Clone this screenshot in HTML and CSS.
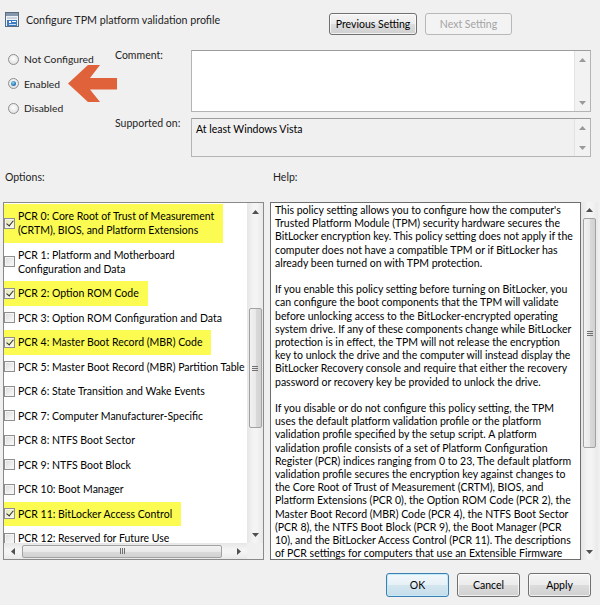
FILE: index.html
```html
<!DOCTYPE html>
<html lang="en">
<head>
<meta charset="utf-8">
<title>Configure TPM platform validation profile</title>
<link rel="stylesheet" href="styles.css">
</head>
<body>
<div class="dialog">
  <header class="head">
    <div class="title">
      <svg class="ticon" width="15" height="15" viewBox="0 0 15 15">
        <rect x="0.5" y="0.5" width="13" height="14" fill="#eef2f6" stroke="#5b6c7e"/>
        <rect x="1" y="1" width="12" height="3" fill="#8597ad"/>
        <rect x="2" y="5" width="10" height="2" fill="#c9d3de"/>
        <rect x="2" y="8" width="10" height="6" fill="#3d7cc2"/>
        <rect x="4" y="9" width="2" height="2" fill="#ffffff"/>
        <rect x="7" y="9" width="4" height="1" fill="#ffffff"/>
        <rect x="4" y="12" width="7" height="1" fill="#cfe0f3"/>
      </svg>
      <span>Configure TPM platform validation profile</span>
    </div>
    <div class="nav">
      <button class="btn prev">Previous Setting</button>
      <button class="btn next" disabled>Next Setting</button>
    </div>
  </header>

  <section class="top">
    <div class="states">
      <label class="radio"><span class="rb"></span>Not Configured</label>
      <label class="radio"><span class="rb on"></span>Enabled</label>
      <label class="radio"><span class="rb"></span>Disabled</label>
      <svg class="pointer" width="50" height="38" viewBox="0 0 50 38">
        <polygon points="0,18.5 20,0 32,0 22,13 49,13 49,24.5 22,24.5 32,37 20,37" fill="#e0623a"/>
      </svg>
    </div>
    <div class="fields">
      <div class="flabel">Comment:</div>
      <div class="box comment">
        <div class="boxbody"></div>
        <div class="vbar plain">
          <span class="arr"><svg width="7" height="4" viewBox="0 0 7 4"><polygon points="0,4 3.5,0 7,4" fill="#9a9a9a"/></svg></span>
          <span class="track"></span>
          <span class="arr"><svg width="7" height="4" viewBox="0 0 7 4"><polygon points="0,0 3.5,4 7,0" fill="#9a9a9a"/></svg></span>
        </div>
      </div>
      <div class="flabel">Supported on:</div>
      <div class="box supported">
        <div class="boxbody">At least Windows Vista</div>
        <div class="vbar plain">
          <span class="arr"><svg width="7" height="4" viewBox="0 0 7 4"><polygon points="0,4 3.5,0 7,4" fill="#9a9a9a"/></svg></span>
          <span class="track"></span>
          <span class="arr"><svg width="7" height="4" viewBox="0 0 7 4"><polygon points="0,0 3.5,4 7,0" fill="#9a9a9a"/></svg></span>
        </div>
      </div>
    </div>
  </section>

  <div class="labels">
    <span class="lab-opt">Options:</span>
    <span class="lab-help">Help:</span>
  </div>

  <div class="panes">
    <div class="list">
      <div class="items">
        <div class="item tall hl"><span class="cb on"></span><span>PCR 0: Core Root of Trust of Measurement<br>(CRTM), BIOS, and Platform Extensions</span></div>
        <div class="item tall"><span class="cb"></span><span>PCR 1: Platform and Motherboard<br>Configuration and Data</span></div>
        <div class="item hl"><span class="cb on"></span><span>PCR 2: Option ROM Code</span></div>
        <div class="item"><span class="cb"></span><span>PCR 3: Option ROM Configuration and Data</span></div>
        <div class="item hl"><span class="cb on"></span><span>PCR 4: Master Boot Record (MBR) Code</span></div>
        <div class="item"><span class="cb"></span><span>PCR 5: Master Boot Record (MBR) Partition Table</span></div>
        <div class="item"><span class="cb"></span><span>PCR 6: State Transition and Wake Events</span></div>
        <div class="item"><span class="cb"></span><span>PCR 7: Computer Manufacturer-Specific</span></div>
        <div class="item"><span class="cb"></span><span>PCR 8: NTFS Boot Sector</span></div>
        <div class="item"><span class="cb"></span><span>PCR 9: NTFS Boot Block</span></div>
        <div class="item"><span class="cb"></span><span>PCR 10: Boot Manager</span></div>
        <div class="item hl"><span class="cb on"></span><span>PCR 11: BitLocker Access Control</span></div>
        <div class="item"><span class="cb"></span><span>PCR 12: Reserved for Future Use</span></div>
      </div>
      <div class="vbar">
        <span class="arr"><svg width="7" height="4" viewBox="0 0 7 4"><polygon points="0,4 3.5,0 7,4" fill="#505050"/></svg></span>
        <span class="track"><span class="thumb v list-thumb"><span class="grip"></span></span></span>
        <span class="arr"><svg width="7" height="4" viewBox="0 0 7 4"><polygon points="0,0 3.5,4 7,0" fill="#505050"/></svg></span>
      </div>
      <div class="hbar">
        <span class="arr"><svg width="4" height="7" viewBox="0 0 4 7"><polygon points="4,0 0,3.5 4,7" fill="#505050"/></svg></span>
        <span class="htrack"><span class="thumb h"><span class="grip"></span></span></span>
        <span class="arr"><svg width="4" height="7" viewBox="0 0 4 7"><polygon points="0,0 4,3.5 0,7" fill="#505050"/></svg></span>
      </div>
      <div class="corner"></div>
    </div>

    <div class="help">
      <div class="helptext">
        <p>This policy setting allows you to configure how the computer's<br>Trusted Platform Module (TPM) security hardware secures the<br>BitLocker encryption key. This policy setting does not apply if the<br>computer does not have a compatible TPM or if BitLocker has<br>already been turned on with TPM protection.</p>
        <p>If you enable this policy setting before turning on BitLocker, you<br>can configure the boot components that the TPM will validate<br>before unlocking access to the BitLocker-encrypted operating<br>system drive. If any of these components change while BitLocker<br>protection is in effect, the TPM will not release the encryption<br>key to unlock the drive and the computer will instead display the<br>BitLocker Recovery console and require that either the recovery<br>password or recovery key be provided to unlock the drive.</p>
        <p>If you disable or do not configure this policy setting, the TPM<br>uses the default platform validation profile or the platform<br>validation profile specified by the setup script. A platform<br>validation profile consists of a set of Platform Configuration<br>Register (PCR) indices ranging from 0 to 23, The default platform<br>validation profile secures the encryption key against changes to<br>the Core Root of Trust of Measurement (CRTM), BIOS, and<br>Platform Extensions (PCR 0), the Option ROM Code (PCR 2), the<br>Master Boot Record (MBR) Code (PCR 4), the NTFS Boot Sector<br>(PCR 8), the NTFS Boot Block (PCR 9), the Boot Manager (PCR<br>10), and the BitLocker Access Control (PCR 11). The descriptions<br>of PCR settings for computers that use an Extensible Firmware</p>
      </div>
      <div class="vbar">
        <span class="arr"><svg width="7" height="4" viewBox="0 0 7 4"><polygon points="0,4 3.5,0 7,4" fill="#505050"/></svg></span>
        <span class="track"><span class="thumb v help-thumb"><span class="grip"></span></span></span>
        <span class="arr"><svg width="7" height="4" viewBox="0 0 7 4"><polygon points="0,0 3.5,4 7,0" fill="#505050"/></svg></span>
      </div>
    </div>
  </div>

  <footer class="foot">
    <button class="btn ok">OK</button>
    <button class="btn">Cancel</button>
    <button class="btn">Apply</button>
  </footer>
</div>
</body>
</html>
```

FILE: styles.css
```css
* { box-sizing: border-box; }

body {
  margin: 0;
  background: #f0f0f0;
  font-family: "Lato", "Noto Sans", sans-serif;
  font-size: 10.5px;
  color: #000;
}

.dialog {
  width: 600px;
  height: 605px;
  overflow: hidden;
}

/* header */
.head {
  display: flex;
  align-items: flex-start;
  height: 47px;
  padding: 12px 0 0 5px;
}
.title {
  display: flex;
  align-items: center;
  gap: 6px;
  height: 15px;
  font-size: 10.7px;
  color: #1e1e1e;
}
.ticon { display: block; }
.nav {
  display: flex;
  gap: 8px;
  margin: 1px 88px 0 auto;
}

.btn {
  height: 22px;
  padding: 0;
  font: inherit;
  color: #000;
  border: 1px solid #707070;
  border-radius: 3px;
  background: linear-gradient(#f4f4f4 0%, #ececec 48%, #dcdcdc 52%, #d0d0d0 100%);
  box-shadow: inset 0 0 0 1px rgba(255,255,255,0.7);
}
.btn.prev { width: 88px; }
.btn.next { width: 87px; }
.btn:disabled {
  color: #a3a3a3;
  border-color: #b8b8b8;
  background: #f3f3f3;
  box-shadow: none;
}

/* top */
.top {
  display: flex;
  height: 110px;
}
.states {
  position: relative;
  width: 115px;
  padding-left: 8px;
}
.radio {
  display: flex;
  align-items: center;
  gap: 5px;
  height: 24.5px;
  color: #1e1e1e;
  font-size: 10.3px;
}
.rb {
  width: 11px;
  height: 11px;
  border-radius: 50%;
  border: 1px solid #8e8f8f;
  background: radial-gradient(circle at 50% 40%, #ffffff 0%, #e8e8e8 60%, #d4d4d4 100%);
  display: flex;
  align-items: center;
  justify-content: center;
}
.rb.on::after {
  content: "";
  width: 5px;
  height: 5px;
  border-radius: 50%;
  background: radial-gradient(circle at 40% 35%, #8fd3f5 0%, #2e7ab8 60%, #1a4e82 100%);
}
.pointer {
  position: absolute;
  left: 68px;
  top: 18px;
}

.fields {
  display: grid;
  grid-template-columns: 76px 400px;
  grid-template-rows: 62px 39px;
  row-gap: 6px;
  padding-top: 3px;
}
.flabel {
  line-height: 13px;
  margin-top: -1px;
  color: #1e1e1e;
}
.box {
  display: flex;
  border: 1px solid #b4b4b4;
  border-top-color: #9c9c9c;
}
.comment { background: #fff; }
.supported { background: #f0f0f0; }
.boxbody {
  flex: 1;
  padding: 3px 4px;
  line-height: 14px;
}
.vbar {
  width: 16px;
  display: flex;
  flex-direction: column;
  align-items: center;
  background: linear-gradient(to right, #e6e6e6, #f4f4f4 40%, #f4f4f4 60%, #e9e9e9);
}
.vbar.plain {
  background: #f2f2f2;
  border-left: 1px solid #e2e2e2;
}
.arr {
  flex: none;
  height: 17px;
  width: 100%;
  display: flex;
  align-items: center;
  justify-content: center;
}
.arr svg { display: block; }
.track {
  flex: 1;
  width: 100%;
  display: flex;
  flex-direction: column;
  align-items: center;
}

.thumb {
  display: flex;
  align-items: center;
  justify-content: center;
  border: 1px solid #a2a2a2;
  border-radius: 2px;
}
.thumb.v {
  width: 13px;
  background: linear-gradient(to right, #f2f2f2, #e9e9e9 50%, #dadada 51%, #d2d2d2);
}
.thumb.h {
  height: 13px;
  background: linear-gradient(#f2f2f2, #e9e9e9 50%, #dadada 51%, #d2d2d2);
}
.thumb.v .grip {
  width: 6px;
  height: 5px;
  background: repeating-linear-gradient(#6f6f6f 0 1px, transparent 1px 2px);
}
.thumb.h .grip {
  width: 5px;
  height: 6px;
  background: repeating-linear-gradient(to right, #6f6f6f 0 1px, transparent 1px 2px);
}
.list-thumb { margin-top: 88px; height: 120px; }
.help-thumb { margin-top: 0; height: 230px; }

/* labels */
.labels {
  display: flex;
  margin-top: 13px;
  height: 14px;
  line-height: 14px;
  color: #1e1e1e;
}
.lab-opt { width: 273px; padding-left: 5px; }

/* panes */
.panes {
  display: flex;
  gap: 6px;
  margin-top: 18px;
  padding-left: 3px;
  height: 358px;
}
.list {
  width: 261px;
  height: 358px;
  border: 1px solid #8a8a8a;
  background: #fff;
  display: grid;
  grid-template-columns: 243px 16px;
  grid-template-rows: 340px 16px;
}
.items {
  overflow: hidden;
  padding-top: 1px;
}
.item {
  display: flex;
  align-items: center;
  gap: 3px;
  width: fit-content;
  padding: 6.25px 9px 6.25px 0;
  line-height: 12px;
  white-space: nowrap;
}
.item.tall {
  padding-top: 5.25px;
  padding-bottom: 5.25px;
  line-height: 14px;
}
.item.hl { background: #fbfb52; }
.cb {
  flex: none;
  width: 11px;
  height: 11px;
  border: 1px solid #8f8f8f;
  background: linear-gradient(135deg, #dcdcdc, #fbfbfb);
  box-shadow: inset 0 0 0 1px #f4f4f4;
  position: relative;
}
.cb.on::after {
  content: "";
  position: absolute;
  left: 3px;
  top: 0px;
  width: 3px;
  height: 6px;
  border: solid #2b2b2b;
  border-width: 0 1.5px 1.5px 0;
  transform: rotate(40deg);
}
.item.hl .cb { background: linear-gradient(135deg, #e3e3b0, #fdfdea); }

.list .vbar { grid-row: 1; grid-column: 2; }
.hbar {
  grid-row: 2;
  grid-column: 1;
  display: flex;
  align-items: center;
  background: linear-gradient(#e6e6e6, #f4f4f4 40%, #f4f4f4 60%, #e9e9e9);
}
.hbar .arr { width: 17px; height: 100%; }
.htrack {
  flex: 1;
  height: 100%;
  display: flex;
  align-items: center;
}
.htrack .thumb { width: 200px; margin-left: 1px; }
.corner { grid-row: 2; grid-column: 2; background: #f0f0f0; }

.help {
  display: flex;
  width: 328px;
  height: 358px;
}
.helptext {
  width: 311px;
  border: 1px solid #6e6e6e;
  background: #fff;
  padding: 1px 4px 0 4px;
  line-height: 13.2px;
  white-space: nowrap;
  overflow: hidden;
}
.helptext p { margin: 0 0 13.2px 0; }
.help .vbar { width: 17px; }
.help .vbar .arr { height: 16px; }

/* footer */
.foot {
  display: flex;
  justify-content: flex-end;
  gap: 8px;
  margin-top: 13px;
  padding-right: 9px;
}
.foot .btn { width: 63px; height: 24px; }
.btn.ok {
  border-color: #3c7fb1;
  box-shadow: inset 0 0 0 1px #c4e9f8;
  background: linear-gradient(#f2f8fb 0%, #e6f1f7 48%, #d3e6f0 52%, #c6dde9 100%);
}
```
